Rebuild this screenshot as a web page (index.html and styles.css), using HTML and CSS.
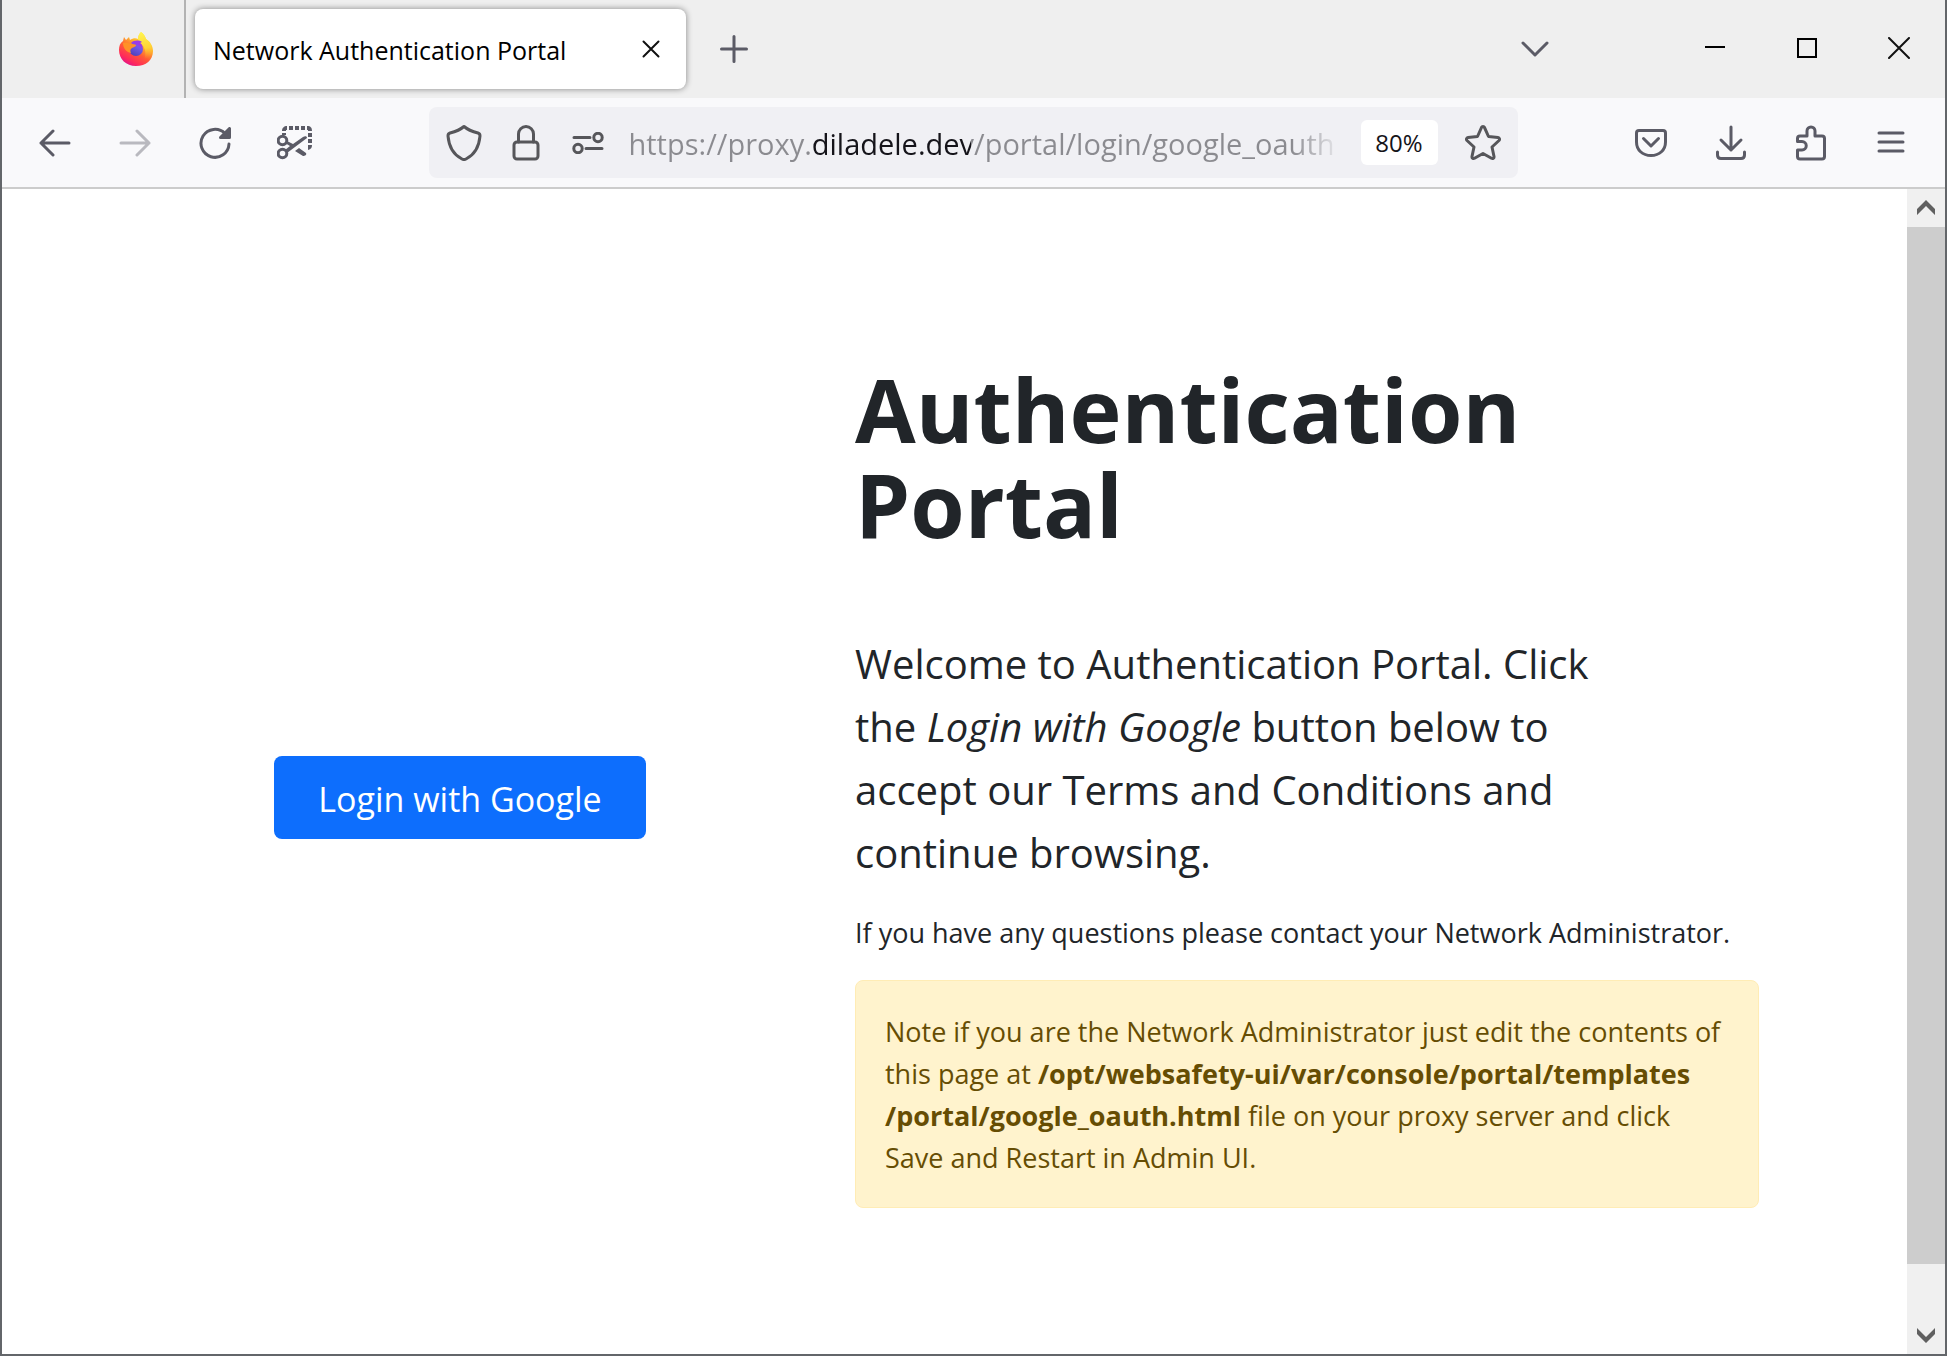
FILE: index.html
```html
<!DOCTYPE html>
<html lang="en">
<head>
<meta charset="utf-8">
<meta name="viewport" content="width=device-width, initial-scale=1">
<title>Network Authentication Portal</title>
<link rel="stylesheet" href="styles.css">
</head>
<body>
<div class="window">
  <header class="tabstrip">
    <button class="firefox" type="button" aria-label="Firefox View">
      <svg width="36" height="36" viewBox="0 0 36 36">
        <defs>
          <linearGradient id="fire" x1="28" y1="4" x2="10" y2="34" gradientUnits="userSpaceOnUse">
            <stop offset="0" stop-color="#fff44f"/><stop offset=".3" stop-color="#ffb52b"/><stop offset=".58" stop-color="#ff5a36"/><stop offset=".85" stop-color="#ff2a5b"/><stop offset="1" stop-color="#e31587"/>
          </linearGradient>
          <linearGradient id="globe" x1="22" y1="10" x2="14" y2="25" gradientUnits="userSpaceOnUse">
            <stop offset="0" stop-color="#b833e1"/><stop offset=".4" stop-color="#7059e8"/><stop offset="1" stop-color="#4a3fb5"/>
          </linearGradient>
          <linearGradient id="tail" x1="22" y1="2" x2="28" y2="28" gradientUnits="userSpaceOnUse">
            <stop offset="0" stop-color="#fff44f"/><stop offset=".6" stop-color="#ffd335"/><stop offset="1" stop-color="#ff9a2a" stop-opacity="0"/>
          </linearGradient>
        </defs>
        <path fill="url(#fire)" d="M23 1c3 2 4 4 5 7 4 2 7 7 7 12 0 9-7 15-17 15S1 28 1 19c0-4 1-7 4-9l1-4 2 3 3-3 1 3c3-2 6-2 8-1 0-3 1-5 3-7z"/>
        <path fill="url(#tail)" d="M23 1c3 2 4 4 5 7 4 3 6 7 6 12-1 5-4 8-8 9 2-5 2-10-1-14-3-3-5-4-5-7s1-5 3-7z"/>
        <circle cx="18" cy="18" r="7" fill="url(#globe)"/>
        <path fill="#9a3be8" d="M13 12c3-3 8-3 11-1l-2 1c2 1 3 3 2 5-3-4-7-4-11-5z"/>
        <path fill="#ff9127" d="M5 12c3-1 5 0 8 1 2 0 4 0 5 1 0 2-3 2-4 3-2 1-2 3-1 5-5-1-8-5-8-10z"/>
      </svg>
    </button>
    <div class="tab">
      <span class="tab-title">Network Authentication Portal</span>
      <button class="tab-close" type="button" aria-label="Close tab">
        <svg width="18" height="18" viewBox="0 0 18 18" class="thin"><path d="M1.500 1.500l15 15M16.500 1.500l-15 15"/></svg>
      </button>
    </div>
    <button class="new-tab" type="button" aria-label="New tab">
      <svg width="28" height="28" viewBox="0 0 28 28" class="line"><path d="M14 1.500v25M1.500 14h25"/></svg>
    </button>
    <div class="spacer"></div>
    <button class="tool" type="button" aria-label="List all tabs">
      <svg width="28" height="16" viewBox="0 0 28 16" class="line"><path d="M2 2l12 12L26 2"/></svg>
    </button>
    <div class="window-controls">
      <button type="button" aria-label="Minimize"><svg width="20" height="20" viewBox="0 0 20 20" class="sharp"><path d="M0 9h20"/></svg></button>
      <button type="button" aria-label="Maximize"><svg width="20" height="20" viewBox="0 0 20 20" class="sharp"><path d="M1 1h18v18H1z"/></svg></button>
      <button type="button" aria-label="Close"><svg width="22" height="22" viewBox="0 0 22 22" class="thin"><path d="M1 1l20 20M21 1L1 21"/></svg></button>
    </div>
  </header>

  <nav class="toolbar" aria-label="Navigation">
    <button class="tool" type="button" aria-label="Back">
      <svg width="32" height="28" viewBox="0 0 32 28" class="line"><path d="M14 2L2 14l12 12M2 14h28"/></svg>
    </button>
    <button class="tool" type="button" aria-label="Forward" disabled>
      <svg width="32" height="28" viewBox="0 0 32 28" class="line"><path d="M18 2l12 12-12 12M30 14H2"/></svg>
    </button>
    <button class="tool" type="button" aria-label="Reload">
      <svg width="32" height="32" viewBox="0 0 32 32" class="line"><path d="M30 17A14 14 0 1 1 26 6.500"/><path class="solid" d="M30.500 1.500v9h-9z"/></svg>
    </button>
    <button class="tool" type="button" aria-label="Take screenshot">
      <svg width="36" height="36" viewBox="0 0 36 36" class="line">
        <path class="solid" stroke="none" d="M5 6c0-3 2-5 5-5v4H9v1zM12 1h4v4h-4zM18 1h4v4h-4zM24 1h4v4h-4zM30 1c4 0 5 2 5 5h-4V5h-1zM31 8h4v4h-4zM31 14h4v4h-4zM31 20h4c0 3-1 4-4 5zM5 8h4v2H5z"/>
        <circle cx="5.500" cy="15.500" r="4.300"/><circle cx="5.500" cy="28.500" r="4.300"/>
        <path class="solid" stroke="none" d="M10 16l6 3 10-7c2-1 4-1 4 1L10 28l-2-3 5-4-5-3zM18 26l4-3 7 5c1 2-1 3-3 3z"/>
      </svg>
    </button>
    <div class="spacer"></div>
    <div class="urlbar">
      <button class="url-icon" type="button" aria-label="Tracking protection">
        <svg width="36" height="36" viewBox="0 0 36 36" class="line dark"><path d="M18 1.500C14 5 8 7 4 8c-1.500.5-2 1.500-2 3 1 12 6 19 14 23 1.500.8 2.500.8 4 0 8-4 13-11 14-23 0-1.500-.5-2.500-2-3-4-1-10-3-14-6.500z"/></svg>
      </button>
      <button class="url-icon" type="button" aria-label="Connection secure">
        <svg width="28" height="36" viewBox="0 0 28 36" class="line dark"><rect x="2" y="17" width="24" height="17" rx="3"/><path d="M6.500 17V9a7.500 7.500 0 0 1 15 0v8"/></svg>
      </button>
      <button class="url-icon" type="button" aria-label="Permissions">
        <svg width="32" height="22" viewBox="0 0 32 22" class="line dark"><path d="M2 5.500h16M14 16.500h16"/><circle cx="26" cy="5.500" r="4.200"/><circle cx="6" cy="16.500" r="4.200"/></svg>
      </button>
      <input class="url" type="text" aria-label="Address" value="https://proxy.diladele.dev/portal/login/google_oauth">
      <button class="zoom" type="button">80%</button>
      <button class="star" type="button" aria-label="Bookmark this page">
        <svg width="36" height="36" viewBox="0 0 36 36" class="line dark"><path d="M16.500 2.500c.6-1.300 2.400-1.300 3 0l4 9 9.500 1c1.500.2 2 2 1 3l-7 6.500 2 9.500c.3 1.500-1.200 2.500-2.500 1.800L18 28.500l-8.500 4.800c-1.300.7-2.800-.3-2.500-1.800l2-9.500-7-6.500c-1-1-.5-2.800 1-3l9.500-1z"/></svg>
      </button>
    </div>
    <div class="spacer"></div>
    <button class="tool" type="button" aria-label="Save to Pocket">
      <svg width="32" height="28" viewBox="0 0 32 28" class="line"><path d="M4 1.500h24c1.500 0 2.500 1 2.500 2.500v9c0 8-6 13.500-14.500 13.500S1.500 21 1.500 13V4c0-1.500 1-2.500 2.500-2.500z"/><path d="M8.500 9.500l7.500 7.500 7.500-7.500"/></svg>
    </button>
    <button class="tool" type="button" aria-label="Downloads">
      <svg width="30" height="36" viewBox="0 0 30 36" class="line"><path d="M15 2v23M5 15l10 10 10-10M1.500 27v3c0 2.500 1 3.500 3.500 3.500h20c2.500 0 3.500-1 3.500-3.500v-3"/></svg>
    </button>
    <button class="tool" type="button" aria-label="Extensions">
      <svg width="32" height="36" viewBox="0 0 32 36" class="line"><path d="M5 11h7V6a4 4 0 0 1 8 0v5h7q2.500 0 2.500 2.500v18q0 2.500-2.500 2.500H5q-2.500 0-2.500-2.500V25H7a4.200 4.200 0 0 0 0-8.500H2.500v-3Q2.500 11 5 11z"/></svg>
    </button>
    <button class="tool" type="button" aria-label="Menu">
      <svg width="28" height="24" viewBox="0 0 28 24" class="line"><path d="M2 2h24M2 11h24M2 20h24"/></svg>
    </button>
  </nav>

  <div class="viewport">
    <main class="portal">
      <div class="action">
        <button class="login" type="button">Login with Google</button>
      </div>
      <section class="intro">
        <h1>Authentication Portal</h1>
        <p class="lead">Welcome to Authentication Portal. Click the <em>Login with Google</em> button below to accept our Terms and Conditions and continue browsing.</p>
        <p class="contact">If you have any questions please contact your Network Administrator.</p>
        <div class="note">Note if you are the Network Administrator just edit the contents of this page at <strong>/opt/websafety-ui/var/console/portal/templates<wbr>/portal/google_oauth.html</strong> file on your proxy server and click Save and Restart in Admin UI.</div>
      </section>
    </main>
    <div class="scrollbar" aria-hidden="true">
      <div class="arrow"><svg width="18" height="16" viewBox="0 0 18 16"><path d="M9 0l9 9v6L9 6 0 15V9z"/></svg></div>
      <div class="track"><div class="thumb"></div></div>
      <div class="arrow"><svg width="18" height="16" viewBox="0 0 18 16"><path d="M9 16l9-9V1L9 10 0 1v6z"/></svg></div>
    </div>
  </div>
</div>
</body>
</html>
```
FILE: styles.css
```css
* { box-sizing: border-box; }

body {
  margin: 0;
  font-family: "Open Sans", "Noto Sans", sans-serif;
  color: #212529;
  background: #fff;
}

button {
  display: flex;
  align-items: center;
  justify-content: center;
  padding: 0;
  border: 0;
  background: none;
  font: inherit;
  color: inherit;
}

.window {
  display: flex;
  flex-direction: column;
  min-height: 100vh;
  border: 2px solid #63666a;
  border-top: 0;
}

/* Icon strokes */
.line {
  fill: none;
  stroke: #5b5b66;
  stroke-width: 3;
  stroke-linecap: round;
  stroke-linejoin: round;
}
.line.dark { stroke: #56565a; }
.line .solid { fill: #5b5b66; }
.thin { fill: none; stroke: #111; stroke-width: 2; stroke-linecap: round; }
.sharp { fill: none; stroke: #000; stroke-width: 2; }

/* Tab strip */
.tabstrip {
  display: flex;
  align-items: center;
  height: 98px;
  background: #efefef;
}
.firefox {
  align-self: stretch;
  width: 184px;
  padding: 0 30px 0 0;
  justify-content: flex-end;
  border-right: 2px solid #b3b3b3;
}
.tab {
  display: flex;
  align-items: center;
  justify-content: space-between;
  width: 491px;
  height: 80px;
  margin-left: 9px;
  padding: 0 18px;
  border-radius: 8px;
  background: #fff;
  box-shadow: 0 0 6px rgba(0, 0, 0, .45);
}
.tab-title { padding-top: 2px; font-size: 25px; color: #000; white-space: nowrap; }
.tab-close { width: 34px; height: 34px; }
.new-tab { width: 96px; height: 80px; }
.spacer { flex: 1; }
.tabstrip .tool { margin-right: 94px; }
.window-controls { display: flex; align-self: stretch; padding-bottom: 2px; }
.window-controls button { width: 92px; }

/* Navigation toolbar */
.toolbar {
  display: flex;
  align-items: center;
  height: 91px;
  padding: 0 14px 0 13px;
  background: #f9f9fb;
  border-bottom: 2px solid #ccc;
}
.tool { flex: none; width: 80px; height: 72px; }
.tool:disabled { opacity: .4; }
.urlbar {
  display: flex;
  align-items: center;
  flex: 0 1 1089px;
  min-width: 0;
  height: 71px;
  padding-left: 4px;
  border-radius: 8px;
  background: #f0f0f4;
}
.url-icon { flex: none; width: 62px; height: 60px; }
.url {
  flex: 1;
  min-width: 0;
  height: 60px;
  margin: 0 19px 0 10px;
  padding: 2px 0 0;
  border: 0;
  outline: 0;
  font: 29px "Open Sans", "Noto Sans", sans-serif;
  color: transparent;
  background: linear-gradient(90deg, #8b8b90 182px, #15141a 182px 342px, #8b8b90 342px);
  background-clip: text;
  -webkit-background-clip: text;
  mask-image: linear-gradient(90deg, #000 calc(100% - 50px), transparent);
}
.zoom {
  flex: none;
  width: 77px;
  height: 45px;
  margin-right: 10px;
  border-radius: 6px;
  background: #fff;
  color: #15141a;
  font-size: 24px;
}
.star { flex: none; width: 70px; height: 60px; }

/* Page area */
.viewport { display: flex; flex: 1; }
.portal {
  display: grid;
  grid-template-columns: minmax(0, 620fr) minmax(0, 904fr);
  column-gap: 85px;
  align-content: start;
  align-items: center;
  flex: 1;
  padding: 173px 148px 24px;
}
.action { display: flex; justify-content: center; }
.login {
  height: 83px;
  padding: 4px 44px 0;
  border-radius: 8px;
  background: #0d6efd;
  color: #fff;
  font-size: 34px;
  white-space: nowrap;
}
h1 {
  margin: 0 0 80px;
  font-size: 88px;
  line-height: 95px;
  font-weight: 700;
}
.lead {
  max-width: 756px;
  margin: 0 0 28px;
  font-size: 40px;
  line-height: 63px;
}
.contact { margin: 0 0 26px; font-size: 27px; line-height: 42px; }
.note {
  margin-bottom: 24px;
  padding: 30px 29px 28px;
  border: 1px solid #ffecb5;
  border-radius: 8px;
  background: #fff3cd;
  color: #664d03;
  font-size: 27px;
  line-height: 42px;
}

/* Scrollbar */
.scrollbar {
  display: flex;
  flex-direction: column;
  width: 38px;
  background: #f0f0f0;
}
.arrow {
  display: flex;
  align-items: center;
  justify-content: center;
  height: 38px;
}
.arrow path { fill: #606060; }
.track { display: flex; flex-direction: column; flex: 1; }
.track::after { content: ""; flex: 1; }
.thumb { flex: 20; background: #cdcdcd; }
```
